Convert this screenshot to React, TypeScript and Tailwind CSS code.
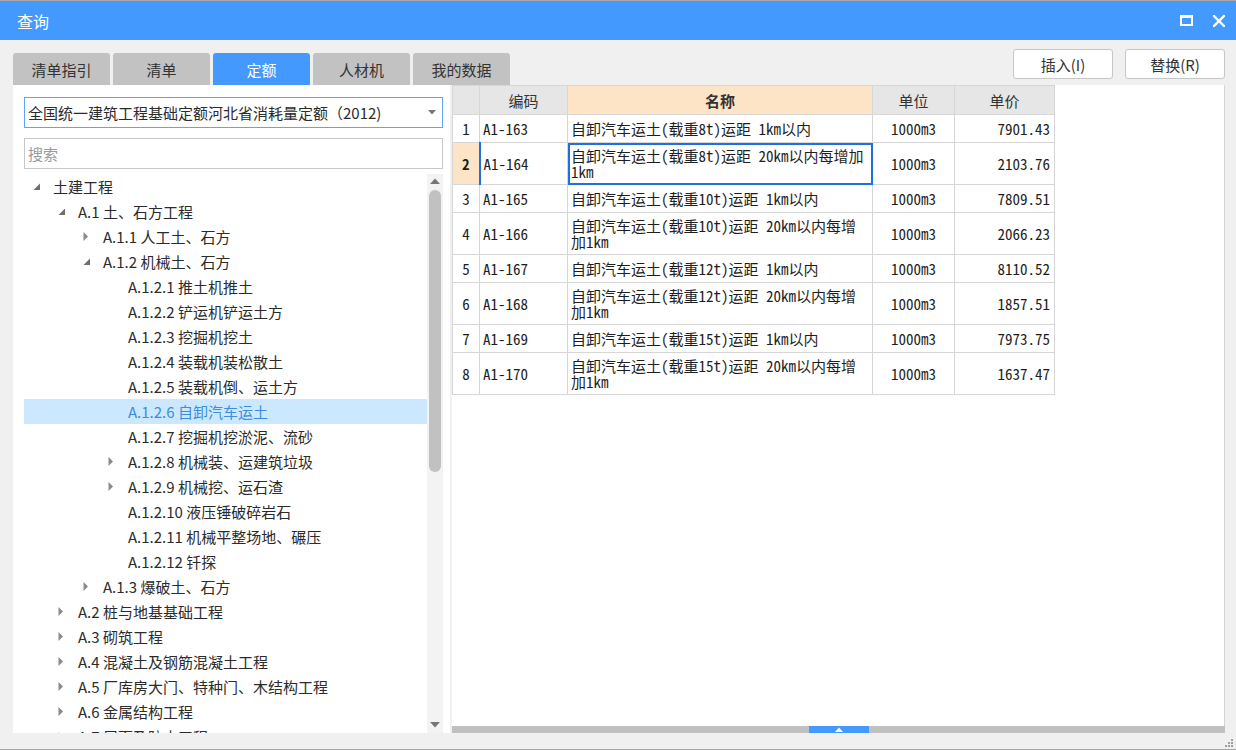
import React from "react";

type TNode = { label: string; level: number; kind: "exp" | "col" | "leaf"; sel?: boolean };

const tree: TNode[] = [
  { label: "土建工程", level: 0, kind: "exp" },
  { label: "A.1 土、石方工程", level: 1, kind: "exp" },
  { label: "A.1.1 人工土、石方", level: 2, kind: "col" },
  { label: "A.1.2 机械土、石方", level: 2, kind: "exp" },
  { label: "A.1.2.1 推土机推土", level: 3, kind: "leaf" },
  { label: "A.1.2.2 铲运机铲运土方", level: 3, kind: "leaf" },
  { label: "A.1.2.3 挖掘机挖土", level: 3, kind: "leaf" },
  { label: "A.1.2.4 装载机装松散土", level: 3, kind: "leaf" },
  { label: "A.1.2.5 装载机倒、运土方", level: 3, kind: "leaf" },
  { label: "A.1.2.6 自卸汽车运土", level: 3, kind: "leaf", sel: true },
  { label: "A.1.2.7 挖掘机挖淤泥、流砂", level: 3, kind: "leaf" },
  { label: "A.1.2.8 机械装、运建筑垃圾", level: 3, kind: "col" },
  { label: "A.1.2.9 机械挖、运石渣", level: 3, kind: "col" },
  { label: "A.1.2.10 液压锤破碎岩石", level: 3, kind: "leaf" },
  { label: "A.1.2.11 机械平整场地、碾压", level: 3, kind: "leaf" },
  { label: "A.1.2.12 钎探", level: 3, kind: "leaf" },
  { label: "A.1.3 爆破土、石方", level: 2, kind: "col" },
  { label: "A.2 桩与地基基础工程", level: 1, kind: "col" },
  { label: "A.3 砌筑工程", level: 1, kind: "col" },
  { label: "A.4 混凝土及钢筋混凝土工程", level: 1, kind: "col" },
  { label: "A.5 厂库房大门、特种门、木结构工程", level: 1, kind: "col" },
  { label: "A.6 金属结构工程", level: 1, kind: "col" },
  { label: "A.7 屋面及防水工程", level: 1, kind: "col" },
];

const pads = ["pl-[9px]", "pl-[34px]", "pl-[59px]", "pl-[84px]"];

type Row = { n: number; code: string; name: string[]; price: string; sel?: boolean };
const rows: Row[] = [
  { n: 1, code: "A1-163", name: ["自卸汽车运土(载重8t)运距 1km以内"], price: "7901.43" },
  { n: 2, code: "A1-164", name: ["自卸汽车运土(载重8t)运距 20km以内每增加", "1km"], price: "2103.76", sel: true },
  { n: 3, code: "A1-165", name: ["自卸汽车运土(载重10t)运距 1km以内"], price: "7809.51" },
  { n: 4, code: "A1-166", name: ["自卸汽车运土(载重10t)运距 20km以内每增", "加1km"], price: "2066.23" },
  { n: 5, code: "A1-167", name: ["自卸汽车运土(载重12t)运距 1km以内"], price: "8110.52" },
  { n: 6, code: "A1-168", name: ["自卸汽车运土(载重12t)运距 20km以内每增", "加1km"], price: "1857.51" },
  { n: 7, code: "A1-169", name: ["自卸汽车运土(载重15t)运距 1km以内"], price: "7973.75" },
  { n: 8, code: "A1-170", name: ["自卸汽车运土(载重15t)运距 20km以内每增", "加1km"], price: "1637.47" },
];

function TreeIcon({ kind }: { kind: TNode["kind"] }) {
  if (kind === "exp")
    return (
      <svg width="8" height="8" viewBox="0 0 8 8" className="shrink-0">
        <polygon points="7,0.5 7,7 0.5,7" fill="#6e6e6e" />
      </svg>
    );
  if (kind === "col")
    return (
      <svg width="8" height="9" viewBox="0 0 8 9" className="shrink-0">
        <polygon points="0.5,0 5,4.5 0.5,9" fill="#8a8a8a" />
      </svg>
    );
  return <div className="w-[8px] h-[8px] shrink-0" />;
}

const tabs = ["清单指引", "清单", "定额", "人材机", "我的数据"];

export default function App() {
  return (
    <div className="w-[1236px] h-[750px] bg-[#f0f0f0] flex flex-col border-t border-b border-[#a8a8a8] overflow-hidden font-['Noto_Sans_CJK_SC','Noto_Sans',sans-serif] text-[15px] text-[#2b2b2b]">
      {/* title bar */}
      <div className="h-[39px] shrink-0 bg-[#4499ff] flex items-center pl-[17px] pr-[10px] text-white">
        <span className="text-[16px] leading-none">查询</span>
        <div className="flex-1" />
        <svg width="13" height="11" viewBox="0 0 13 11" className="mr-[20px]">
          <rect x="1" y="1.5" width="11" height="8.5" fill="none" stroke="white" strokeWidth="2" />
          <rect x="0" y="0" width="13" height="3" fill="white" />
        </svg>
        <svg width="12" height="12" viewBox="0 0 12 12" className="mr-[1px]">
          <path d="M1 1 L11 11 M11 1 L1 11" stroke="white" strokeWidth="2.4" strokeLinecap="square" />
        </svg>
      </div>

      {/* tabs + buttons */}
      <div className="h-[45px] shrink-0 flex pl-[13px] pr-[11px]">
        <div className="flex gap-[3px] self-end">
          {tabs.map((t) => (
            <div
              key={t}
              className={`w-[97px] h-[32px] rounded-t-[3px] flex items-center justify-center leading-none ${
                t === "定额" ? "bg-[#4499ff] text-white" : "bg-[#c2c2c2] text-[#333]"
              }`}
            >
              {t}
            </div>
          ))}
        </div>
        <div className="flex-1" />
        <div className="flex gap-[12px] mt-[9px] self-start">
          <button className="w-[100px] h-[30px] bg-white border border-[#c6c6c6] rounded-[3px] text-[15px] text-[#333] leading-none">
            插入(I)
          </button>
          <button className="w-[100px] h-[30px] bg-white border border-[#c6c6c6] rounded-[3px] text-[15px] text-[#333] leading-none">
            替换(R)
          </button>
        </div>
      </div>

      {/* main */}
      <div className="h-[648px] shrink-0 flex gap-[2px] pl-[13px] pr-[11px]">
        {/* left panel */}
        <div className="w-[437px] h-full bg-white flex flex-col pl-[11px] pr-[7px] pt-[12px]">
          <div className="h-[31px] w-[419px] border border-[#5da5f5] flex items-center pl-[3px] pr-[6px]">
            <span className="flex-1 leading-none whitespace-nowrap">全国统一建筑工程基础定额河北省消耗量定额（2012)</span>
            <svg width="8" height="5" viewBox="0 0 8 5">
              <polygon points="0,0 8,0 4,4.5" fill="#777" />
            </svg>
          </div>
          <div className="h-[31px] w-[419px] mt-[10px] border border-[#c8c8c8] flex items-center pl-[3px]">
            <span className="text-[#9a9a9a] leading-none">搜索</span>
          </div>
          <div className="mt-[5px] flex-1 flex min-h-0">
            <div className="w-[403px] h-full overflow-hidden">
              {tree.map((n) => (
                <div
                  key={n.label}
                  className={`h-[25px] flex items-center ${pads[n.level]} ${
                    n.sel ? "bg-[#cce8ff] text-[#3b8de0]" : ""
                  }`}
                >
                  <TreeIcon kind={n.kind} />
                  <span className="ml-[12px] whitespace-nowrap leading-none">{n.label}</span>
                </div>
              ))}
            </div>
            <div className="w-[16px] h-full bg-[#f3f3f3] flex flex-col items-center">
              <svg width="10" height="6" viewBox="0 0 10 6" className="mt-[4px]">
                <polygon points="0,6 10,6 5,0.5" fill="#777" />
              </svg>
              <div className="mt-[6px] w-[12px] h-[282px] rounded-full bg-[#c1c1c1]" />
              <div className="flex-1" />
              <svg width="10" height="6" viewBox="0 0 10 6" className="mb-[5px]">
                <polygon points="0,0 10,0 5,5.5" fill="#777" />
              </svg>
            </div>
          </div>
        </div>

        {/* right panel */}
        <div className="w-[773px] h-full flex flex-col">
          <div className="flex-1 bg-white border-r border-[#d4d4d4] overflow-hidden">
            <table className="table-fixed border-collapse text-[15px]">
              <colgroup>
                <col className="w-[27px]" />
                <col className="w-[88px]" />
                <col className="w-[305px]" />
                <col className="w-[82px]" />
                <col className="w-[100px]" />
              </colgroup>
              <thead>
                <tr className="h-[29px] text-[#333]">
                  <th className="border border-[#d6d6d6] bg-[#e6e6e6] font-normal"></th>
                  <th className="border border-[#d6d6d6] bg-[#e6e6e6] font-normal leading-none">编码</th>
                  <th className="border border-[#d6d6d6] bg-[#fde4c6] font-bold leading-none">名称</th>
                  <th className="border border-[#d6d6d6] bg-[#e6e6e6] font-normal leading-none">单位</th>
                  <th className="border border-[#d6d6d6] bg-[#e6e6e6] font-normal leading-none">单价</th>
                </tr>
              </thead>
              <tbody className="font-['Noto_Sans_Mono_CJK_SC','Liberation_Mono',monospace] text-[#1e1e1e]">
                {rows.map((r) => (
                  <tr key={r.n} className={r.name.length > 1 ? "h-[42px]" : "h-[28px]"}>
                    <td
                      className={`border border-[#d6d6d6] text-center leading-none ${
                        r.sel ? "bg-[#fde4c6] font-bold border-r-2 border-r-[#1f6fe0]" : ""
                      }`}
                    >
                      {r.n}
                    </td>
                    <td className="border border-[#d6d6d6] pl-[3px] leading-none whitespace-nowrap">{r.code}</td>
                    <td
                      className={`border border-[#d6d6d6] pl-[3px] leading-[16px] whitespace-nowrap overflow-hidden ${
                        r.sel ? "outline-2 outline-[#1f6fe0] -outline-offset-2" : ""
                      }`}
                    >
                      {r.name.map((l, i) => (
                        <div key={i}>{l}</div>
                      ))}
                    </td>
                    <td className="border border-[#d6d6d6] text-center leading-none">1000m3</td>
                    <td className="border border-[#d6d6d6] text-right pr-[4px] leading-none">{r.price}</td>
                  </tr>
                ))}
              </tbody>
            </table>
          </div>
          <div className="h-[7px] shrink-0 bg-[#c0c0c0] flex justify-center">
            <div className="w-[60px] h-full bg-[#4499ff] flex items-center justify-center">
              <svg width="8" height="5" viewBox="0 0 8 5">
                <polygon points="0,5 8,5 4,0.5" fill="white" />
              </svg>
            </div>
          </div>
        </div>
      </div>

      {/* bottom strip */}
      <div className="flex-1 flex justify-end items-end pr-[3px] pb-[2px]">
        <svg width="9" height="9" viewBox="0 0 9 9">
          <rect x="7" y="1" width="2" height="2" fill="#a0a0a0" />
          <rect x="4" y="4" width="2" height="2" fill="#a0a0a0" />
          <rect x="7" y="4" width="2" height="2" fill="#a0a0a0" />
          <rect x="1" y="7" width="2" height="2" fill="#a0a0a0" />
          <rect x="4" y="7" width="2" height="2" fill="#a0a0a0" />
          <rect x="7" y="7" width="2" height="2" fill="#a0a0a0" />
        </svg>
      </div>
    </div>
  );
}
